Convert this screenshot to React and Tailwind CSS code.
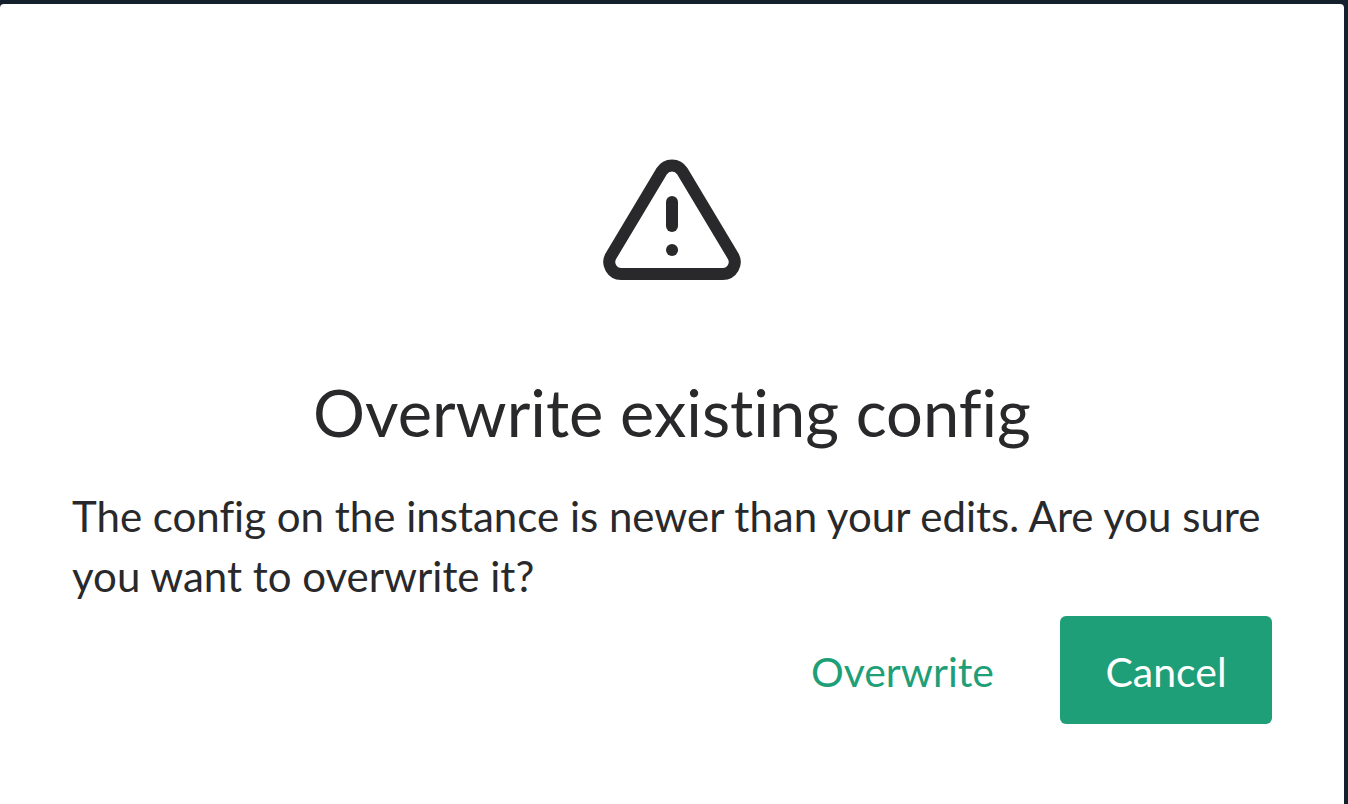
function AlertIcon() {
  return (
    <svg
      className="size-36"
      viewBox="0 0 24 24"
      fill="none"
      stroke="currentColor"
      strokeWidth="2"
      strokeLinecap="round"
      strokeLinejoin="round"
      aria-hidden="true"
    >
      <path d="M10.29 3.86L1.82 18a2 2 0 0 0 1.71 3h16.94a2 2 0 0 0 1.71-3L13.71 3.86a2 2 0 0 0-3.42 0z" />
      <line x1="12" y1="9" x2="12" y2="13" />
      <line x1="12" y1="17" x2="12.01" y2="17" />
    </svg>
  );
}

export default function App() {
  return (
    <div className="flex min-h-screen bg-[#14202c] pt-1 pr-1 font-[Lato,sans-serif] text-[#29292b] [font-variant-ligatures:none]">
      <div
        role="alertdialog"
        aria-labelledby="dialog-title"
        aria-describedby="dialog-text"
        className="flex flex-1 flex-col rounded-t-sm bg-white px-18 pt-36 pb-20"
      >
        <div className="flex justify-center">
          <AlertIcon />
        </div>
        <h1 id="dialog-title" className="mt-20 text-center text-[65px] leading-[80px]">
          Overwrite existing config
        </h1>
        <p id="dialog-text" className="mt-[34px] text-[42px] leading-[60px]">
          The config on the instance is newer than your edits. Are you sure you want to overwrite it?
        </p>
        <div className="mt-[10px] flex justify-end gap-6 text-[41px] leading-[60px]">
          <button type="button" className="rounded-md px-[42px] pt-[26px] pb-[22px] text-[#1e9f78]">
            Overwrite
          </button>
          <button
            type="button"
            className="min-w-[212px] rounded-md bg-[#1e9f78] px-[42px] pt-[26px] pb-[22px] text-white"
          >
            Cancel
          </button>
        </div>
      </div>
    </div>
  );
}
